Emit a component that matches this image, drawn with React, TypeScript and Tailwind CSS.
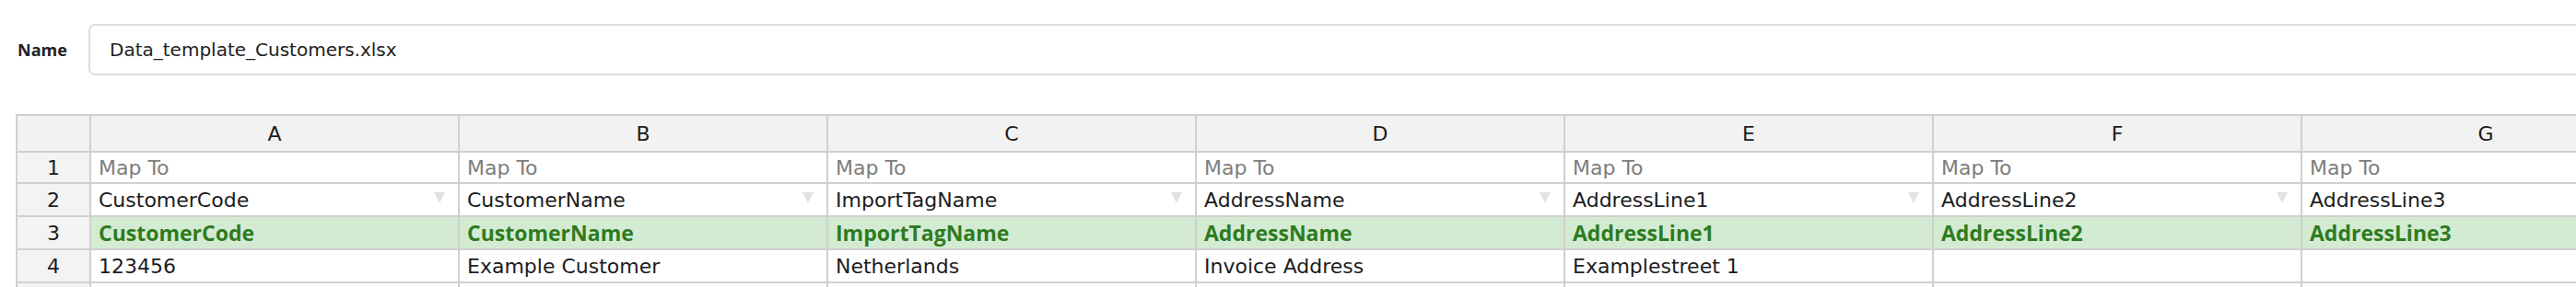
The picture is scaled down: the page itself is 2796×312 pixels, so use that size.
import React from "react";

const columns = ["A", "B", "C", "D", "E", "F", "G"];
const mapped = ["CustomerCode", "CustomerName", "ImportTagName", "AddressName", "AddressLine1", "AddressLine2", "AddressLine3"];
const sample = ["123456", "Example Customer", "Netherlands", "Invoice Address", "Examplestreet 1", "", ""];

const Caret = () => (
  <svg width="12" height="12" viewBox="0 0 12 12" className="absolute right-[14px] top-[9px]" aria-hidden="true">
    <polygon points="0,0 12,0 6,12" fill="#e2e2e2" />
  </svg>
);

const RowNum: React.FC<{ n?: number }> = ({ n }) => (
  <div className="flex items-center justify-center bg-[#f3f3f3] text-[22px] text-[#1c1c1c]">{n}</div>
);

export default function App() {
  return (
    <div className="h-[312px] w-full overflow-hidden bg-white font-['DejaVu_Sans',sans-serif]">
      <div className="flex items-center pt-[26px] pl-[19px]">
        <label className="w-[77px] shrink-0 font-['Open_Sans',sans-serif] text-[18px] font-bold text-[#222]">Name</label>
        <div className="flex h-[56px] w-[2760px] shrink-0 items-center rounded-[7px] border-2 border-[#dedede] pl-[21px] text-[20px] text-[#222]">
          Data_template_Customers.xlsx
        </div>
      </div>

      <div className="mt-[42px] ml-[17px] grid w-max grid-cols-[78px_repeat(7,398px)] grid-rows-[38px_32px_34px_34px_34px_34px] gap-[2px] border-2 border-[#d0d0d0] bg-[#d0d0d0] text-[22px]">
        <div className="bg-[#f2f2f2]" />
        {columns.map((c) => (
          <div key={c} className="flex items-center justify-center bg-[#f2f2f2] text-[#1c1c1c]">
            {c}
          </div>
        ))}

        <RowNum n={1} />
        {columns.map((c) => (
          <div key={c} className="flex items-center bg-white pl-[8px] text-[#7d7d7d]">
            Map To
          </div>
        ))}

        <RowNum n={2} />
        {mapped.map((m) => (
          <div key={m} className="relative flex items-center bg-white pl-[8px] text-[#1c1c1c]">
            {m}
            <Caret />
          </div>
        ))}

        <RowNum n={3} />
        {mapped.map((m) => (
          <div key={m} className="flex items-center bg-[#d3ebd2] pl-[8px] font-['Open_Sans',sans-serif] text-[23px] font-bold text-[#2e7b1f]">
            {m}
          </div>
        ))}

        <RowNum n={4} />
        {sample.map((s, i) => (
          <div key={i} className="flex items-center bg-white pl-[8px] text-[#1c1c1c]">
            {s}
          </div>
        ))}

        <RowNum />
        {columns.map((c) => (
          <div key={c} className="bg-white" />
        ))}
      </div>
    </div>
  );
}
